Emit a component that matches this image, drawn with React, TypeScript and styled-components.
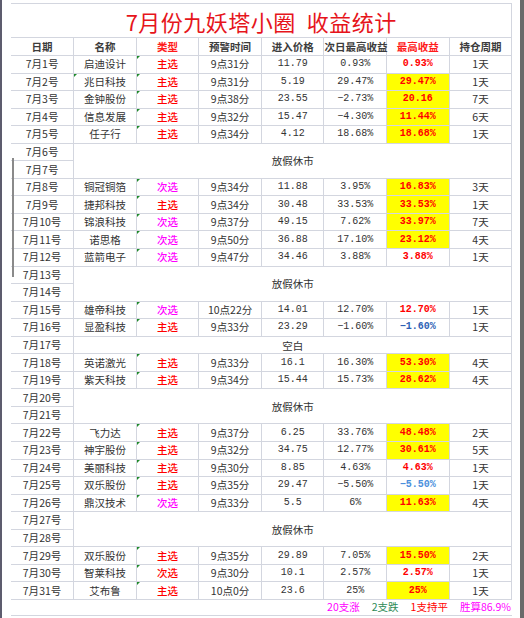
import React from "react";
import styled, { createGlobalStyle } from "styled-components";

type Tone = "hot" | "red" | "blue" | "sky";

interface Trade {
  day: number;
  name: string;
  kind: string;
  kindColor: string;
  time: string;
  price: string;
  next: string;
  best: string;
  tone: Tone;
  hold: string;
  nameMark?: boolean;
}

interface Gap {
  day: number;
  span: number;
  label?: string;
}

type Row = { trade: Trade } | { gap: Gap } | { covered: number };

const RED = "#ff0000";
const PINK = "#ff00ff";

const trades: Trade[] = [
  { day: 1, name: "启迪设计", kind: "主选", kindColor: RED, time: "9点31分", price: "11.79", next: "0.93%", best: "0.93%", tone: "red", hold: "1天" },
  { day: 2, name: "兆日科技", kind: "主选", kindColor: RED, time: "9点31分", price: "5.19", next: "29.47%", best: "29.47%", tone: "hot", hold: "1天", nameMark: true },
  { day: 3, name: "金钟股份", kind: "主选", kindColor: RED, time: "9点38分", price: "23.55", next: "-2.73%", best: "20.16", tone: "hot", hold: "7天" },
  { day: 4, name: "信息发展", kind: "主选", kindColor: RED, time: "9点32分", price: "15.47", next: "-4.30%", best: "11.44%", tone: "hot", hold: "6天" },
  { day: 5, name: "任子行", kind: "主选", kindColor: RED, time: "9点34分", price: "4.12", next: "18.68%", best: "18.68%", tone: "hot", hold: "1天" },
  { day: 8, name: "铜冠铜箔", kind: "次选", kindColor: PINK, time: "9点34分", price: "11.88", next: "3.95%", best: "16.83%", tone: "hot", hold: "3天" },
  { day: 9, name: "捷邦科技", kind: "主选", kindColor: RED, time: "9点34分", price: "30.48", next: "33.53%", best: "33.53%", tone: "hot", hold: "1天" },
  { day: 10, name: "锦浪科技", kind: "次选", kindColor: PINK, time: "9点37分", price: "49.15", next: "7.62%", best: "33.97%", tone: "hot", hold: "7天" },
  { day: 11, name: "诺思格", kind: "次选", kindColor: PINK, time: "9点50分", price: "36.88", next: "17.10%", best: "23.12%", tone: "hot", hold: "4天" },
  { day: 12, name: "蓝箭电子", kind: "次选", kindColor: PINK, time: "9点47分", price: "34.46", next: "3.88%", best: "3.88%", tone: "red", hold: "1天" },
  { day: 15, name: "雄帝科技", kind: "次选", kindColor: PINK, time: "10点22分", price: "14.01", next: "12.70%", best: "12.70%", tone: "red", hold: "1天" },
  { day: 16, name: "显盈科技", kind: "主选", kindColor: RED, time: "9点33分", price: "23.29", next: "-1.60%", best: "-1.60%", tone: "blue", hold: "1天" },
  { day: 18, name: "英诺激光", kind: "主选", kindColor: RED, time: "9点33分", price: "16.1", next: "16.30%", best: "53.30%", tone: "hot", hold: "4天" },
  { day: 19, name: "紫天科技", kind: "主选", kindColor: RED, time: "9点34分", price: "15.44", next: "15.73%", best: "28.62%", tone: "hot", hold: "4天" },
  { day: 22, name: "飞力达", kind: "主选", kindColor: RED, time: "9点37分", price: "6.25", next: "33.76%", best: "48.48%", tone: "hot", hold: "2天" },
  { day: 23, name: "神宇股份", kind: "主选", kindColor: RED, time: "9点32分", price: "34.75", next: "12.77%", best: "30.61%", tone: "hot", hold: "5天" },
  { day: 24, name: "美丽科技", kind: "主选", kindColor: RED, time: "9点30分", price: "8.85", next: "4.63%", best: "4.63%", tone: "red", hold: "1天" },
  { day: 25, name: "双乐股份", kind: "主选", kindColor: RED, time: "9点35分", price: "29.47", next: "-5.50%", best: "-5.50%", tone: "sky", hold: "1天" },
  { day: 26, name: "鼎汉技术", kind: "次选", kindColor: PINK, time: "9点33分", price: "5.5", next: "6%", best: "11.63%", tone: "hot", hold: "4天" },
  { day: 29, name: "双乐股份", kind: "主选", kindColor: RED, time: "9点35分", price: "29.89", next: "7.05%", best: "15.50%", tone: "hot", hold: "2天" },
  { day: 30, name: "智莱科技", kind: "次选", kindColor: RED, time: "9点30分", price: "10.1", next: "2.57%", best: "2.57%", tone: "red", hold: "1天" },
  { day: 31, name: "艾布鲁", kind: "主选", kindColor: RED, time: "10点0分", price: "23.6", next: "25%", best: "25%", tone: "hot", hold: "1天" },
];

const gaps: Gap[] = [
  { day: 6, span: 2, label: "放假休市" },
  { day: 13, span: 2, label: "放假休市" },
  { day: 17, span: 1, label: "空白" },
  { day: 20, span: 2, label: "放假休市" },
  { day: 27, span: 2, label: "放假休市" },
];

// 1~31号 한 줄씩 만들기
const buildRows = (): Row[] => {
  const rows: Row[] = [];
  for (let d = 1; d <= 31; d++) {
    const t = trades.find((x) => x.day === d);
    if (t) {
      rows.push({ trade: t });
      continue;
    }
    const g = gaps.find((x) => x.day === d);
    if (g) rows.push({ gap: g });
    else rows.push({ covered: d });
  }
  return rows;
};

const headers = ["日期", "名称", "类型", "预警时间", "进入价格", "次日最高收益", "最高收益", "持仓周期"];
const redHeaders = ["类型", "最高收益"];

const App: React.FC = () => {
  const rows = buildRows();

  return (
    <Page>
      <GlobalStyle />
      <Sheet>
        <colgroup>
          {headers.map((h) => (
            <col key={h} />
          ))}
        </colgroup>
        <tbody>
          <tr>
            <TitleCell colSpan={8}>7月份九妖塔小圈&nbsp;&nbsp;收益统计</TitleCell>
          </tr>
          <HeadRow>
            {headers.map((h) => (
              <HeadCell key={h} red={redHeaders.includes(h) ? 1 : 0}>
                {h}
              </HeadCell>
            ))}
          </HeadRow>
          {rows.map((row, i) => {
            if ("trade" in row) {
              const t = row.trade;
              return (
                <BodyRow key={i}>
                  <TextCell>7月{t.day}号</TextCell>
                  <TextCell mark={t.nameMark ? 1 : 0}>{t.name}</TextCell>
                  <KindCell mark={1} style={{ color: t.kindColor }}>
                    {t.kind}
                  </KindCell>
                  <TextCell>{t.time}</TextCell>
                  <NumCell>{t.price}</NumCell>
                  <NumCell>{t.next.replace("-", "−")}</NumCell>
                  <BestCell tone={t.tone}>{t.best.replace("-", "−")}</BestCell>
                  <TextCell>{t.hold}</TextCell>
                </BodyRow>
              );
            }
            if ("gap" in row) {
              const g = row.gap;
              return (
                <BodyRow key={i}>
                  <TextCell>7月{g.day}号</TextCell>
                  <GapCell colSpan={7} rowSpan={g.span}>
                    {g.label}
                  </GapCell>
                </BodyRow>
              );
            }
            return (
              <BodyRow key={i}>
                <TextCell>7月{row.covered}号</TextCell>
              </BodyRow>
            );
          })}
        </tbody>
      </Sheet>
      <Summary>
        <SumItem color="#ff00ff">20支涨</SumItem>
        <SumItem color="#2e8b57">2支跌</SumItem>
        <SumItem color="#ff0000">1支持平</SumItem>
        <SumItem color="#ff00ff">胜算86.9%</SumItem>
      </Summary>
      <ScrollMark />
    </Page>
  );
};

export default App;

const GlobalStyle = createGlobalStyle`
  html, body {
    margin: 0;
    padding: 0;
    background: #ffffff;
  }
  body {
    font-family: "Noto Sans CJK SC", "Liberation Sans", sans-serif;
  }
`;

const LINE = "#d3d6df";

const Page = styled.div`
  position: relative;
  width: 524px;
  height: 618px;
  box-sizing: border-box;
  padding: 3px 8px 0 9px;
  border-left: 2px solid #5d5c6e;
  border-right: 4px solid #6a6a6a;
  overflow: hidden;
`;

const Sheet = styled.table`
  width: 501px;
  table-layout: fixed;
  border-collapse: collapse;
  border-top: 1px solid ${LINE};

  col {
    width: 62.6px;
  }
`;

const TitleCell = styled.td`
  height: 33px;
  padding: 0;
  text-align: center;
  vertical-align: middle;
  color: #e6141b;
  font-size: 22px;
  line-height: 22px;
  letter-spacing: 0.5px;
  border-right: 1px solid ${LINE};
  border-bottom: 1px solid ${LINE};
`;

const HeadRow = styled.tr`
  height: 18px;
`;

const HeadCell = styled.td<{ red: number }>`
  padding: 0;
  text-align: center;
  font-size: 10.5px;
  line-height: 12px;
  font-weight: 700;
  white-space: nowrap;
  color: ${(p) => (p.red ? "#ff1a1a" : "#3c3c3c")};
  border-right: 1px solid ${LINE};
  border-bottom: 1px solid ${LINE};
`;

const BodyRow = styled.tr`
  height: 17.55px;
`;

const TextCell = styled.td<{ mark?: number }>`
  position: relative;
  padding: 0;
  text-align: center;
  font-size: 10.5px;
  line-height: 12px;
  color: #333333;
  white-space: nowrap;
  border-right: 1px solid ${LINE};
  border-bottom: 1px solid ${LINE};

  &::before {
    content: "";
    display: ${(p) => (p.mark ? "block" : "none")};
    position: absolute;
    left: 0;
    top: 0;
    border-top: 3px solid #1e8a2a;
    border-right: 3px solid transparent;
  }
`;

const KindCell = styled(TextCell)`
  font-weight: 500;
`;

const NumCell = styled(TextCell)`
  font-family: "Liberation Mono", "DejaVu Sans Mono", monospace;
  font-size: 10px;
`;

const toneColor: Record<Tone, string> = {
  hot: "#ff0000",
  red: "#ff0000",
  blue: "#2d5fb5",
  sky: "#4a8fdc",
};

const BestCell = styled(NumCell)<{ tone: Tone }>`
  font-weight: 700;
  color: ${(p) => toneColor[p.tone]};
  background: ${(p) => (p.tone === "hot" ? "#ffff00" : "transparent")};
`;

const GapCell = styled.td`
  padding: 0;
  text-align: center;
  font-size: 10.5px;
  font-weight: 400;
  color: #333333;
  border-right: 1px solid ${LINE};
  border-bottom: 1px solid ${LINE};
`;

const Summary = styled.div`
  display: flex;
  justify-content: flex-end;
  align-items: center;
  gap: 12px;
  width: 501px;
  height: 16px;
  padding-right: 1px;
  box-sizing: border-box;
  border-bottom: 1px solid ${LINE};
`;

const SumItem = styled.span<{ color: string }>`
  color: ${(p) => p.color};
  font-size: 10.5px;
  line-height: 12px;
`;

const ScrollMark = styled.div`
  position: absolute;
  left: 10px;
  top: 158px;
  width: 2px;
  height: 119px;
  background: #8a8a8a;
`;
